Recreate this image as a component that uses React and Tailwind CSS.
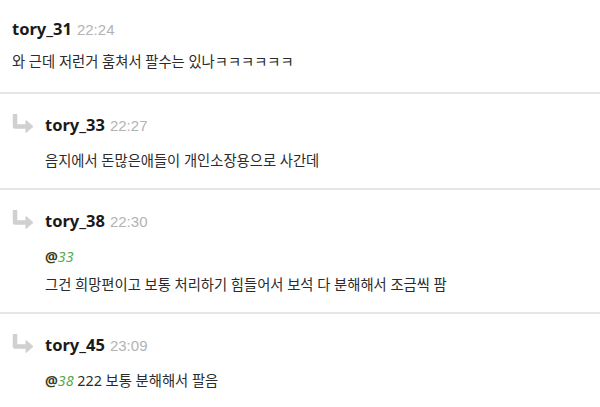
const comments = [
  { id: 1, name: 'tory_31', time: '22:24', reply: false, lines: [[{ t: '와 근데 저런거 훔쳐서 팔수는 있나ㅋㅋㅋㅋㅋㅋ' }]] },
  { id: 2, name: 'tory_33', time: '22:27', reply: true, lines: [[{ t: '음지에서 돈많은애들이 개인소장용으로 사간데' }]] },
  {
    id: 3,
    name: 'tory_38',
    time: '22:30',
    reply: true,
    lines: [[{ at: '33' }], [{ t: '그건 희망편이고 보통 처리하기 힘들어서 보석 다 분해해서 조금씩 팜' }]],
  },
  { id: 4, name: 'tory_45', time: '23:09', reply: true, lines: [[{ at: '38' }, { t: ' 222 보통 분해해서 팔음' }]] },
];

function ReplyArrow() {
  return (
    <svg width="22" height="20" viewBox="0 0 22 20" className="shrink-0">
      <path d="M3 1 V12.5 H15" fill="none" stroke="#d0d0d0" strokeWidth="4.5" strokeLinejoin="round" strokeLinecap="round" />
      <path d="M14 6.5 L21 12.5 L14 18.5 Z" fill="#d0d0d0" stroke="#d0d0d0" strokeLinejoin="round" />
    </svg>
  );
}

function Comment({ c, first }) {
  return (
    <div className={`flex border-b-2 border-[#e6e6e6] pl-3 pr-3 ${first ? 'pt-[17px] pb-[16px]' : 'pt-[19px] pb-[13px]'}`}>
      {c.reply && (
        <div className="w-[33px] pt-[1px]">
          <ReplyArrow />
        </div>
      )}
      <div className="flex flex-col">
        <div className="flex items-baseline h-6 leading-6">
          <span className="text-[16.5px] font-bold text-[#1a1a1a]">{c.name}</span>
          <span className="ml-[5px] text-[15px] text-[#b3b3b3] font-['Liberation_Sans',sans-serif]">{c.time}</span>
        </div>
        <div className={first ? 'mt-[7px]' : 'mt-[10px]'}>
          {c.lines.map((line, i) => (
            <div key={i} className="text-[14.3px] leading-[28px] text-[#2b2b2b] whitespace-nowrap">
              {line.map((part, j) =>
                part.at ? (
                  <span key={j}>
                    <span className="font-bold text-[#403c14]">@</span>
                    <span className="italic text-[#4fa94f]">{part.at}</span>
                  </span>
                ) : (
                  <span key={j}>{part.t}</span>
                )
              )}
            </div>
          ))}
        </div>
      </div>
    </div>
  );
}

export default function App() {
  return (
    <div className="w-[600px] h-[407px] bg-white overflow-hidden font-['Noto_Sans','Noto_Sans_CJK_KR',sans-serif]">
      {comments.map((c, i) => (
        <Comment key={c.id} c={c} first={i === 0} />
      ))}
    </div>
  );
}
